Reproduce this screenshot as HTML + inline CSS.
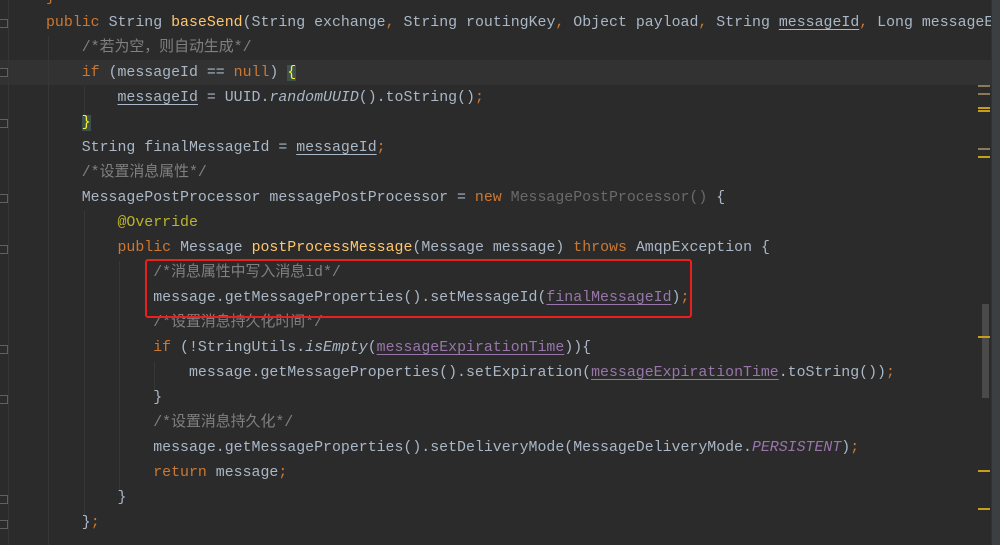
<!DOCTYPE html>
<html><head><meta charset="utf-8"><style>
html,body{margin:0;padding:0;width:1000px;height:545px;overflow:hidden;background:#2b2b2b}
.code{position:absolute;left:46px;top:-14px;font-family:"Liberation Mono","Noto Sans CJK SC",monospace;font-size:14.9px;line-height:25px;color:#a9b7c6;white-space:pre}
.k{color:#cc7832}.f{color:#ffc66d}.c{color:#808080}.p{color:#9876aa}.a{color:#bbb529}.u{text-decoration:underline;text-underline-offset:3px;text-decoration-thickness:1px}
.i{font-style:italic}
.hl{position:absolute;left:0;top:60px;width:992px;height:25px;background:#323232}
.br{background:#3b514d}
.box{position:absolute;left:145px;top:259px;width:543px;height:55px;border:2px solid #e8201e;border-radius:3px}
.side{position:absolute;left:991px;top:0;width:9px;height:545px;background:#3c3f41;border-left:1px solid #323232}
.mk{position:absolute;left:978px;width:12px;height:2px;background:#c69e1c}
.guide{position:absolute;width:1px;background:#373737}
.fold{position:absolute;left:0;width:7px;height:7px;border:1px solid #606060;border-left:none;background:#2b2b2b}
</style></head><body>
<div class="hl"></div>
<div style="position:absolute;left:8px;top:0;width:1px;height:545px;background:#363636"></div>
<div class="fold" style="top:19px"></div>
<div class="fold" style="top:68px"></div>
<div class="fold" style="top:119px"></div>
<div class="fold" style="top:194px"></div>
<div class="fold" style="top:245px"></div>
<div class="fold" style="top:345px"></div>
<div class="fold" style="top:395px"></div>
<div class="fold" style="top:495px"></div>
<div class="fold" style="top:520px"></div>
<div class="guide" style="left:48px;top:36px;height:509px"></div>
<div class="guide" style="left:84px;top:86px;height:30px"></div>
<div class="guide" style="left:84px;top:211px;height:305px"></div>
<div class="guide" style="left:119px;top:261px;height:230px"></div>
<div class="guide" style="left:154px;top:362px;height:30px"></div>
<div class="code"><span class="k">}</span>
<span class="k">public </span>String <span class="f">baseSend</span>(String exchange<span class="k">, </span>String routingKey<span class="k">, </span>Object payload<span class="k">, </span>String <span class="u">messageId</span><span class="k">, </span>Long messageE
    <span class="c">/*若为空，则自动生成*/</span>
    <span class="k">if </span>(messageId == <span class="k">null</span>) <span class="br" style="color:#ffef28">{</span>
        <span class="u">messageId</span> = UUID.<span class="i">randomUUID</span>().toString()<span class="k">;</span>
    <span class="br" style="color:#ffef28">}</span>
    String finalMessageId = <span class="u">messageId</span><span class="k">;</span>
    <span class="c">/*设置消息属性*/</span>
    MessagePostProcessor messagePostProcessor = <span class="k">new </span><span style="color:#6a6a6a">MessagePostProcessor()</span> {
        <span class="a">@Override</span>
        <span class="k">public </span>Message <span class="f">postProcessMessage</span>(Message message) <span class="k">throws </span>AmqpException {
            <span class="c">/*消息属性中写入消息id*/</span>
            message.getMessageProperties().setMessageId(<span class="p u">finalMessageId</span>)<span class="k">;</span>
            <span class="c">/*设置消息持久化时间*/</span>
            <span class="k">if </span>(!StringUtils.<span class="i">isEmpty</span>(<span class="p u">messageExpirationTime</span>)){
                message.getMessageProperties().setExpiration(<span class="p u">messageExpirationTime</span>.toString())<span class="k">;</span>
            }
            <span class="c">/*设置消息持久化*/</span>
            message.getMessageProperties().setDeliveryMode(MessageDeliveryMode.<span class="p i">PERSISTENT</span>)<span class="k">;</span>
            <span class="k">return </span>message<span class="k">;</span>
        }
    }<span class="k">;</span></div>
<div class="box"></div>
<div class="mk" style="top:85px;background:#8a7a55"></div>
<div class="mk" style="top:93px;background:#8a7a55"></div>
<div class="mk" style="top:107px"></div>
<div class="mk" style="top:110px"></div>
<div class="mk" style="top:148px;background:#8a7a55"></div>
<div class="mk" style="top:156px"></div>
<div style="position:absolute;left:982px;top:304px;width:7px;height:94px;background:#4a4a4a"></div>
<div class="mk" style="top:336px"></div>
<div class="mk" style="top:470px"></div>
<div class="mk" style="top:508px"></div>
<div class="side"></div>
</body></html>
